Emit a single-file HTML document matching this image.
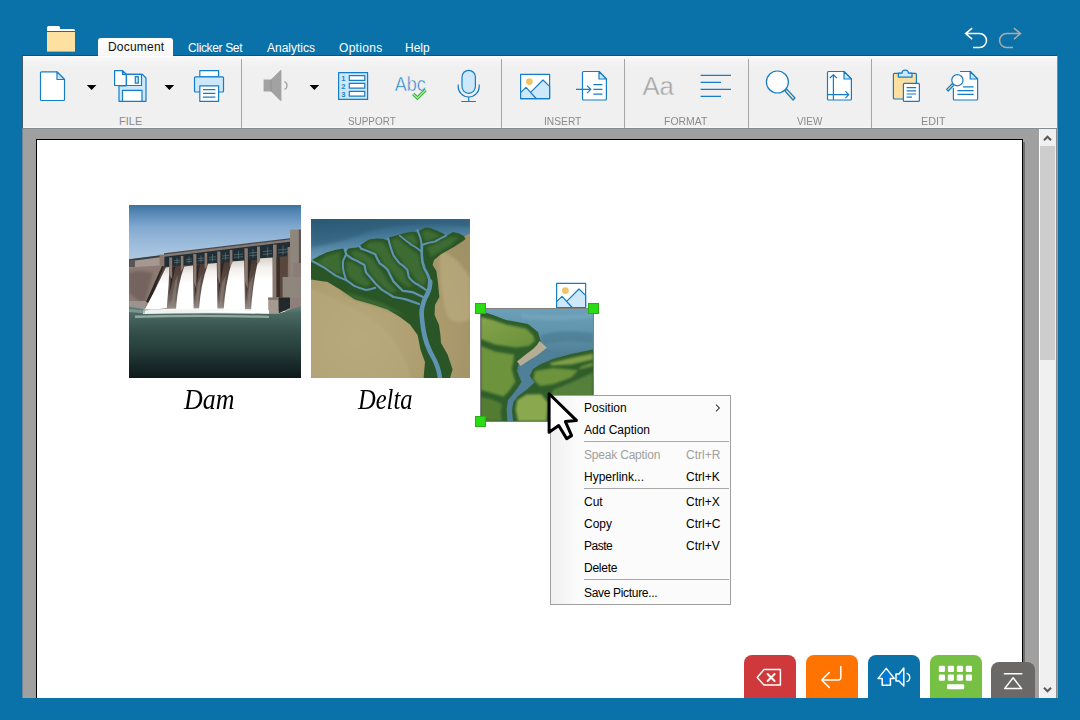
<!DOCTYPE html>
<html>
<head>
<meta charset="utf-8">
<title>Clicker</title>
<style>
html,body{margin:0;padding:0;}
body{width:1080px;height:720px;overflow:hidden;background:#0b72a9;font-family:"Liberation Sans",sans-serif;position:relative;}
.abs{position:absolute;}
#ribbon{left:22px;top:55px;width:1036px;height:73px;background:linear-gradient(#ffffff 0px,#f7f7f7 2px,#f0f0f0 11px,#f0f0f0 70px,#fafafa 72px);border-top:1px solid #3c444b;border-left:1px solid #3f5a70;border-right:1px solid #8b8783;box-sizing:border-box;}
#docarea{left:22px;top:128px;width:1036px;height:570px;background:#a0a0a0;border-top:1px solid #828a92;border-left:1px solid #6f8496;box-sizing:border-box;}
#page{left:36px;top:139px;width:987px;height:559px;background:#fff;border-left:1px solid #000;border-top:1px solid #000;border-right:1px solid #000;box-sizing:border-box;}
#pshadow{left:1023px;top:142px;width:2px;height:556px;background:#6e6e6e;}
#scroll{left:1039px;top:129px;width:18px;height:569px;background:#f0f0f0;border-left:1px solid #fff;border-right:1px solid #8a8a8a;box-sizing:border-box;}
#thumb{left:1040px;top:146px;width:15px;height:214px;background:#cdcdcd;}
.tab{color:#fff;font-size:12px;top:41px;white-space:nowrap;line-height:14px;}
#tabdoc{left:98px;top:38px;width:75px;height:18px;background:linear-gradient(#ffffff,#f6f6f6);border-radius:3px 3px 0 0;}
.sep{top:59px;width:1px;height:69px;background:#a6a6a6;}
.glabel{top:115px;font-size:11px;color:#8a8a8a;line-height:13px;white-space:nowrap;transform-origin:0 0;}
svg{position:absolute;overflow:visible;}
.menu{left:550px;top:395px;width:181px;height:210px;background:#fbfbfb;border:1px solid #a0a0a0;box-sizing:border-box;}
.gut{left:551px;top:396px;width:26px;height:208px;background:linear-gradient(90deg,#f1f1f1,#f6f6f6 60%,#fbfbfb);}
.mi{left:584px;font-size:12px;color:#000;line-height:14px;white-space:nowrap;}
.sc{left:686px;font-size:12px;color:#000;line-height:14px;white-space:nowrap;}
.msep{left:584px;width:145px;height:1px;background:#a8a8a8;}
.cap{font-family:"Liberation Serif",serif;font-style:italic;font-size:28.5px;transform-origin:0 0;color:#000;line-height:30px;white-space:nowrap;}
.btn{top:655px;width:52px;height:43px;border-radius:8px 8px 0 0;}
.hd{width:9px;height:9px;background:#2bdc14;border:1px solid #25b011;}
</style>
</head>
<body>
<!-- frame -->
<div id="ribbon" class="abs"></div>
<div id="docarea" class="abs"></div>
<div id="page" class="abs"></div>
<div id="pshadow" class="abs"></div>
<div id="scroll" class="abs"></div>
<div id="thumb" class="abs"></div>

<!-- tabs -->
<div id="tabdoc" class="abs"></div>
<div class="abs tab" style="left:108px;top:40px;color:#111;letter-spacing:0.2px">Document</div>
<div class="abs tab" style="left:188px;letter-spacing:-0.35px;">Clicker Set</div>
<div class="abs tab" style="left:267px;">Analytics</div>
<div class="abs tab" style="left:339px;letter-spacing:0.3px">Options</div>
<div class="abs tab" style="left:405px;">Help</div>

<!-- RIBBON-START -->
<!-- top icons -->
<svg class="abs" style="left:0;top:0" width="1080" height="60" viewBox="0 0 1080 60">
  <!-- folder -->
  <path d="M47 27.5 Q47 26 48.5 26 H58.5 Q60 26 60 27.5 V29 H73.5 Q75 29 75 30.5 V31 H47 Z" fill="#ffffff"/>
  <rect x="47" y="32" width="28" height="19.6" fill="#fee0a0"/>
  <!-- undo -->
  <path d="M972.2 28.1 L965.6 33.6 L972.2 39.1 M965.8 33.6 H979.5 A7 7 0 0 1 979.5 47.6 H973" fill="none" stroke="#ffffff" stroke-width="1.5"/>
  <!-- redo -->
  <path d="M1013.9 28.1 L1020.5 33.6 L1013.9 39.1 M1020.3 33.6 H1006.6 A7 7 0 0 0 1006.6 47.6 H1013" fill="none" stroke="#aeaaa6" stroke-width="1.5"/>
</svg>

<!-- ribbon separators -->
<div class="abs sep" style="left:241px"></div>
<div class="abs sep" style="left:501px"></div>
<div class="abs sep" style="left:624px"></div>
<div class="abs sep" style="left:748px"></div>
<div class="abs sep" style="left:871px"></div>

<!-- group labels -->
<div class="abs glabel" style="left:119px;transform:scaleX(1.0)">FILE</div>
<div class="abs glabel" style="left:348px;transform:scaleX(0.9)">SUPPORT</div>
<div class="abs glabel" style="left:544px;transform:scaleX(0.93)">INSERT</div>
<div class="abs glabel" style="left:664px;transform:scaleX(0.95)">FORMAT</div>
<div class="abs glabel" style="left:797px;transform:scaleX(0.9)">VIEW</div>
<div class="abs glabel" style="left:921px;transform:scaleX(0.98)">EDIT</div>

<!-- ribbon icons -->
<svg class="abs" style="left:0;top:56px" width="1080" height="72" viewBox="0 56 1080 72">
 <g fill="none" stroke="#157dc7" stroke-width="1.2" stroke-linejoin="round">
  <!-- new doc -->
  <path d="M41.5 71.8 H57 L64.5 79.5 V99.5 Q64.5 100.5 63.5 100.5 H41.5 Q40.5 100.5 40.5 99.5 V72.8 Q40.5 71.8 41.5 71.8 Z" fill="#ffffff"/>
  <path d="M57 71.8 V79.5 H64.5 Z" fill="#cde8fb"/>
  <!-- save -->
  <path d="M119 86 V101.3 H146 V78 L142.5 74.3 H126 V86 Z" fill="#cde8fb"/>
  <rect x="126.5" y="74.3" width="15" height="11.2" fill="#ffffff"/>
  <rect x="135.3" y="76.6" width="3" height="6.6" fill="#cde8fb"/>
  <rect x="122.5" y="90.3" width="19.5" height="11" fill="#ffffff"/>
  <path d="M114.6 70.6 H122.5 L126.2 74.3 V85.5 H114.6 Z" fill="#ffffff"/>
  <path d="M122.5 70.6 V74.3 H126.2 Z" fill="#cde8fb"/>
  <!-- printer -->
  <rect x="199.8" y="70.6" width="18.8" height="6.2" fill="#ffffff"/>
  <path d="M195.5 76.8 H222.5 Q223.5 76.8 223.5 77.8 V91 Q223.5 92 222.5 92 H195.5 Q194.5 92 194.5 91 V77.8 Q194.5 76.8 195.5 76.8 Z" fill="#cde8fb"/>
  <rect x="199.8" y="85.8" width="18.8" height="15.5" fill="#ffffff"/>
  <path d="M203 89.6 H215.4 M203 93.4 H215.4 M203 97.2 H215.4"/>
  <!-- numbered list -->
  <rect x="338.6" y="72.6" width="29" height="26.8" fill="#cde8fb"/>
  <rect x="349.3" y="75.6" width="15.5" height="4.8" fill="#ffffff"/>
  <rect x="349.3" y="83.4" width="15.5" height="4.8" fill="#ffffff"/>
  <rect x="349.3" y="91.4" width="15.5" height="4.8" fill="#ffffff"/>
  <!-- microphone -->
  <rect x="462" y="70.3" width="13.4" height="23" rx="6.7" fill="#cde8fb"/>
  <path d="M458.2 84.5 V86.5 A10.5 10.5 0 0 0 479.2 86.5 V84.5 M468.7 97 V101.4 M461.3 101.5 H476"/>
  <!-- picture -->
  <rect x="520.6" y="74.4" width="29" height="24.2" fill="#ffffff"/>
  <path d="M520.6 92.6 L526 87.4 L536.4 98.6 H520.6 Z" fill="#cde8fb"/>
  <path d="M530.6 92.4 L543 80 L549.6 86.4 V98.6 H536.4 Z" fill="#cde8fb"/>
  <!-- insert doc -->
  <path d="M583.5 71.5 H599 L606.4 79 V99 Q606.4 100 605.4 100 H583.5 Q582.5 100 582.5 99 V72.5 Q582.5 71.5 583.5 71.5 Z" fill="#ffffff"/>
  <path d="M599 71.5 V79 H606.4 Z" fill="#cde8fb"/>
  <path d="M576 89.4 H590.8 M587 85.6 L590.8 89.4 L587 93.2 M593.4 84.7 H602.4 M593.4 89.4 H602.4 M593.4 94.1 H602.4"/>
  <!-- align -->
  <path d="M700.6 75.4 H731 M700.6 82.4 H721 M700.6 89.4 H731 M700.6 96.4 H721"/>
  <!-- magnifier -->
  <path d="M785 91 L786.8 89.2 L795 98 L793 100 Z" fill="#f7e0a2"/>
  <circle cx="777.4" cy="82" r="11" fill="#ffffff"/>
  <!-- page layout -->
  <path d="M828.5 71.5 H844 L851.4 79 V99 Q851.4 100 850.4 100 H828.5 Q827.5 100 827.5 99 V72.5 Q827.5 71.5 828.5 71.5 Z" fill="#ffffff"/>
  <path d="M844 71.5 V79 H851.4 Z" fill="#cde8fb"/>
  <path d="M833.4 100 V74.6 M830 78 L833.4 74.6 L836.8 78 M827.5 94.7 H848.8 M845.4 91.3 L848.8 94.7 L845.4 98.1"/>
  <!-- clipboard -->
  <rect x="893.4" y="73.4" width="23" height="25.6" rx="1" fill="#fde0a0"/>
  <path d="M898.4 77.2 V73.2 H902 Q902 70.2 905.2 70.2 Q908.4 70.2 908.4 73.2 H912 V77.2 Z" fill="#cde8fb"/>
  <rect x="903.4" y="83.4" width="16" height="18" rx="1" fill="#ffffff"/>
  <path d="M906.6 87.6 H916.2 M906.6 90.8 H916.2 M906.6 94 H916.2 M906.6 97.2 H912"/>
  <!-- find -->
  <path d="M953.4 88 V99 Q953.4 100 954.4 100 H976.6 Q977.6 100 977.6 99 V79 L970.2 71.5 H960" fill="#ffffff"/>
  <path d="M970.2 71.5 V79 H977.6 Z" fill="#cde8fb"/>
  <path d="M957.4 90.6 H973.6 M957.4 94.4 H973.6 M963 86.8 H973.6"/>
  <path d="M952.5 83.5 L954 85 L948.2 91 L946.6 89.4 Z" fill="#f7e0a2"/>
  <circle cx="957.4" cy="80.2" r="5.6" fill="#ffffff"/>
 </g>
 <!-- sun dots -->
 <circle cx="529.4" cy="81.6" r="3.4" fill="#f2c266"/>
 <!-- list numbers -->
 <g fill="#1c83c9" font-family="Liberation Sans, sans-serif" font-weight="bold" font-size="7.6px">
  <text x="341.2" y="80.9">1</text><text x="341.2" y="88.7">2</text><text x="341.2" y="96.7">3</text>
 </g>
 <!-- dropdown arrows -->
 <path d="M86.8 85 H96.4 L91.6 90 Z M164.6 85 H174.2 L169.4 90 Z M309.6 85 H319.2 L314.4 90 Z" fill="#000"/>
 <!-- speaker (disabled) -->
 <path d="M263.6 79.6 H271 L280.6 70 Q281.4 69.6 281.4 70.6 V100.4 Q281.4 101.4 280.6 101 L271 91.4 H263.6 Z" fill="#a2a2a2"/>
 <path d="M271 79.6 V91.4" stroke="#8e8e8e" stroke-width="0.8" fill="none"/>
 <path d="M284.4 81.6 A4.2 4.2 0 0 1 284.4 89.4" stroke="#a2a2a2" stroke-width="1.3" fill="none"/>
 <!-- Abc -->
 <text x="394.8" y="90.6" font-family="Liberation Sans, sans-serif" font-size="19.5px" fill="#1c83c9" textLength="31" lengthAdjust="spacingAndGlyphs" stroke="#f0f0f0" stroke-width="0.55">Abc</text>
 <path d="M413.2 93.8 L417.4 98 L425.6 89.8" fill="none" stroke="#2fb52f" stroke-width="3.2"/>
 <path d="M413.2 93.8 L417.4 98 L425.6 89.8" fill="none" stroke="#b7efb0" stroke-width="1.1"/>
 <!-- Aa -->
 <text x="642.4" y="94.8" font-family="Liberation Sans, sans-serif" font-size="26.5px" fill="#a4a4a4" textLength="31.5" lengthAdjust="spacingAndGlyphs" stroke="#f0f0f0" stroke-width="0.45">Aa</text>
</svg>
<!-- RIBBON-END -->
<!-- IMAGES-START -->
<!-- dam image -->
<svg class="abs" style="left:129px;top:205px;overflow:hidden" width="172" height="173" viewBox="0 0 172 173">
 <defs>
  <linearGradient id="sky" x1="0" y1="0" x2="0" y2="1"><stop offset="0" stop-color="#3d729f"/><stop offset="0.12" stop-color="#5788b5"/><stop offset="0.35" stop-color="#82a9d0"/><stop offset="0.65" stop-color="#a0bfdd"/><stop offset="1" stop-color="#b4cde6"/></linearGradient>
  <linearGradient id="wat" x1="0" y1="0" x2="0" y2="1"><stop offset="0" stop-color="#64857c"/><stop offset="0.1" stop-color="#4a6a62"/><stop offset="0.35" stop-color="#35514a"/><stop offset="0.6" stop-color="#263f3a"/><stop offset="0.82" stop-color="#18292a"/><stop offset="1" stop-color="#0e1a19"/></linearGradient>
  <linearGradient id="gap" x1="0" y1="0" x2="0" y2="1"><stop offset="0" stop-color="#3e302b"/><stop offset="0.45" stop-color="#5b4b44"/><stop offset="0.8" stop-color="#70635d"/><stop offset="1" stop-color="#a39c98"/></linearGradient>
  <linearGradient id="fall" x1="0" y1="0" x2="0" y2="1"><stop offset="0" stop-color="#d8d0ca"/><stop offset="0.18" stop-color="#f3f0ed"/><stop offset="0.4" stop-color="#ffffff"/><stop offset="1" stop-color="#ffffff"/></linearGradient>
  <filter id="b1" x="-10%" y="-10%" width="120%" height="120%"><feGaussianBlur stdDeviation="0.55"/></filter>
  <filter id="b2" x="-10%" y="-10%" width="120%" height="120%"><feGaussianBlur stdDeviation="1.4"/></filter>
 </defs>
 <rect width="172" height="64" fill="url(#sky)"/>
 <!-- left wall -->
 <path d="M0 54.4 L31 50.4 L36 50 V104 H0 Z" fill="#8c7a73"/>
 <path d="M0 56 L31 52 V60.6 L0 62.4 Z" fill="#a59892"/>
 <path d="M0 54.2 L31 50.2 V52.2 L0 56.2 Z" fill="#3b3f40"/>
 <rect x="0" y="55" width="6" height="7" fill="#5a5552"/>
 <path d="M0 68 Q10 64 24 68 L16 98 Q8 96 0 88 Z" fill="#6a5a57" opacity="0.7" filter="url(#b2)"/>
 <path d="M0 96 H18 L16 104 H0 Z" fill="#9c928e"/>
 <path d="M33 61 L36.4 61.4 L21 98 L17 97 Z" fill="#2b2523"/>
 <!-- space behind falls -->
 <path d="M35 60 L161 48 V106 H18 Z" fill="url(#gap)"/>
 <!-- dark gate band -->
 <path d="M35 49.4 L161 34.4 V52.6 L35 61.6 Z" fill="#1f2e37"/>
 <path d="M35 49.2 L161 34.2 V36.8 L35 51.8 Z" fill="#857a72"/>
 <path d="M35 48.2 L161 33.2 V34.4 L35 49.4 Z" fill="#4a4746"/>
 <!-- gate grid hints -->
 <g stroke="#718e8a" stroke-width="0.7" opacity="0.75">
  <path d="M45 55.6 L51 55.1 M45 57.6 L51 57.1 M57 54.6 L63 54.1 M57 56.8 L63 56.3 M69 53.6 L75 53 M69 55.8 L75 55.2 M80 52.4 L87 51.8 M80 54.8 L87 54.2 M93 51 L100 50.4 M93 53.4 L100 52.8 M105 49.8 L114 49 M105 52.4 L114 51.6 M120 48.2 L128 47.4 M120 50.8 L128 50 M134 46.6 L143 45.8 M134 49.4 L143 48.6 M149 45 L159 44 M149 47.8 L159 46.8"/>
  <path d="M48 52.8 V59.6 M60 51.6 V58.6 M72 50.4 V57.6 M83.5 49 V56.6 M96.5 47.4 V55.4 M109.5 45.8 V54 M124 44 V52.8 M138.5 42.2 V51.6 M154 40.4 V50"/>
 </g>
 <!-- dark shadow in gaps -->
 <g fill="#2c2421" opacity="0.85" filter="url(#b1)">
  <path d="M43 62 L46.5 61.6 L42.5 80 L40 90 Z"/>
  <path d="M67.4 60 L71 59.6 L67.5 82 L65.5 94 Z"/>
  <path d="M91.2 57.6 L95 57.2 L91.2 80 L89 94 Z"/>
  <path d="M119 55 L122.6 54.6 L119 80 L117 94 Z"/>
 </g>
 <!-- light streaks in gaps -->
 <g fill="#9a908b" opacity="0.45" filter="url(#b1)">
  <path d="M46 76 L49 70 L46 98 L42 100 Z"/>
  <path d="M69 78 L72.5 70 L69 100 L66.5 100 Z"/>
  <path d="M93 78 L97 70 L93 100 L90 100 Z"/>
  <path d="M120.5 78 L124.5 70 L121 100 L118 100 Z"/>
 </g>
 <!-- waterfalls -->
 <g filter="url(#b1)">
 <path d="M36.8 62.4 L40.4 62 L39.6 80 L37.8 103 L15 106 Q26 86 36.8 62.4 Z" fill="url(#fall)"/>
 <path d="M55.2 61.4 L64 60.6 L64.6 104 H47 Q48.4 80 55.2 61.4 Z" fill="url(#fall)"/>
 <path d="M79 58.8 L87.8 58 L88.4 104.6 H70 Q71.6 80 79 58.8 Z" fill="url(#fall)"/>
 <path d="M102.8 56.4 L115.2 55.4 L116 105.4 H94.6 Q96.2 80 102.8 56.4 Z" fill="url(#fall)"/>
 <path d="M129.3 53.6 L143.6 52.6 V107 L122 106.5 Q123.4 80 129.3 53.6 Z" fill="url(#fall)"/>
 </g>
 <!-- pillars -->
 <g fill="#8d786d">
  <path d="M30.6 49.6 H35.4 V61 H30.6 Z"/>
  <path d="M40.2 52.6 H43.2 V74 L40.4 70 Z"/><path d="M51.8 51 H54.4 V63 L51.8 66.4 Z"/>
  <path d="M64.2 49 H67.4 V84 L64.6 76 Z"/><path d="M75.6 48 H78.2 V61 L75.6 64.4 Z"/>
  <path d="M88.2 46.4 H91.4 V80 L88.6 72 Z"/><path d="M100.8 45 H103.4 V58 L100.8 62 Z"/>
  <path d="M115.4 43.2 H118.8 V84 L116 76 Z"/><path d="M128 41.6 H131 V56 L128 60 Z"/>
  <path d="M144 39.6 H147.6 V92 H144 Z"/>
  <path d="M158.6 42 H162.4 V72 H158.6 Z"/>
 </g>
 <path d="M147.6 52 L158.6 51 V92 H147.6 Z" fill="#59473f"/>
 <path d="M147.6 52 L151 51.6 V92 H147.6 Z" fill="#3a2e2a"/>
 <!-- tower + right blocks -->
 <rect x="161" y="24.6" width="11" height="48" fill="#8e857d"/>
 <rect x="169.8" y="24.6" width="2.2" height="48" fill="#5c5550"/>
 <rect x="164" y="58" width="8" height="16" fill="#8d7d78"/>
 <rect x="153.6" y="72" width="18.4" height="22" fill="#8f867e"/>
 <rect x="161" y="93" width="11" height="13" fill="#8e7f7a"/>
 <rect x="139.2" y="92.6" width="10.4" height="16" fill="#a59a92"/>
 <rect x="139.2" y="92.6" width="10.4" height="2.2" fill="#7d726c"/>
 <path d="M149.6 92.6 H161 V103 L149.6 108.6 Z" fill="#23282a"/>
 <!-- water -->
 <path d="M0 101.6 L16 104.6 L140 108.6 L150 108.6 L172 101 V173 H0 Z" fill="url(#wat)"/>
 <g filter="url(#b1)">
 <path d="M14 105.4 Q60 101.5 140 105 L140 108.8 Q70 107.8 14 109 Z" fill="#ffffff" opacity="0.9"/>
 <path d="M6 110.6 Q70 108.8 140 110.8 L140 113 Q70 111.2 6 113 Z" fill="#c4d2cc" opacity="0.6"/>
 <path d="M0 104 L16 105.6 V108.4 L0 107 Z" fill="#8ea49c" opacity="0.7"/>
 </g>
</svg>

<!-- delta image -->
<svg class="abs" style="left:311px;top:219px;overflow:hidden" width="159" height="159" viewBox="0 0 159 159">
 <defs>
  <linearGradient id="sea" x1="0.2" y1="0" x2="0.45" y2="1"><stop offset="0" stop-color="#2d5c78"/><stop offset="0.3" stop-color="#3f7290"/><stop offset="0.6" stop-color="#5f93b0"/><stop offset="1" stop-color="#7aaac4"/></linearGradient>
  <radialGradient id="sand" cx="0.3" cy="0.75" r="0.85"><stop offset="0" stop-color="#b8a97c"/><stop offset="0.55" stop-color="#ac9c6e"/><stop offset="1" stop-color="#a09166"/></radialGradient>
  <filter id="db" x="-10%" y="-10%" width="120%" height="120%"><feGaussianBlur stdDeviation="1.6"/></filter>
  <filter id="db2" x="-10%" y="-10%" width="120%" height="120%"><feGaussianBlur stdDeviation="0.5"/></filter>
 </defs>
 <rect width="159" height="159" fill="url(#sand)"/>
 <path d="M128 30 Q150 40 159 60 V100 Q140 110 134 90 Q128 60 128 30 Z" fill="#bfb084" opacity="0.6" filter="url(#db)"/>
 <path d="M0 70 Q30 80 60 100 Q90 120 100 159 H0 Z" fill="#b9aa7e" opacity="0.55" filter="url(#db)"/>
 <path d="M0 0 H159 V14.6 L153 17.4 L141 24 L122 38 L60 50 L0 52 Z" fill="url(#sea)"/>
 <path d="M0 28 Q30 24 60 12 Q100 2 159 8 V0 H0 Z" fill="#2a5873" opacity="0.5" filter="url(#db)"/>
 <!-- vegetation -->
 <g filter="url(#db2)">
 <path d="M0 41.6 L8 37 L15.4 33.6 L24 31 L32 29.6 L35 33 L37.4 29.6 L47.4 28.2 L49.8 25.8 L58 20.6 L66 19.6 L72 19.8 L76.4 21.4 L78 18.4 L87 16 L89.4 15.2 L96 13.6 L102.4 12.8 L106.6 13.4 L108.6 11.4 L114.6 8.4 L119 9 L123.8 10.8 L130 13.4 L134 15.6 L135.4 16.8 L142 13 L148 14.6 L153 17 L154.4 20 L152.8 21.6 L143.6 27.6 L130 35.2 L123 41 L121.6 46 L125.4 52 L127 64 L128.4 78 L124 86 L123.6 96 L128 106 L129.4 116 L130 124 L136.6 135.6 L141.6 150.6 L139 159 H112.6 L114 143 L109.6 131 L106.6 116 L99 105.6 L89 98 L76.6 90.6 L61.6 85.6 L44 80.6 L29 70.6 L16.6 63 L0 60.6 Z" fill="#2b5427"/>
 </g>
 <!-- lighter interior of lobes -->
 <g fill="#4c7c3c" opacity="0.6" filter="url(#db)">
  <path d="M6 43 L16 36.4 L29 33 L30 44 L30.6 56 L22 53 L12 47 Z"/>
  <path d="M39 33 L47 31.4 L52 34 L62 40 L66 47 L72 54 L78 64 L86 72 L80 74 L70 66 L62 58 L57 50 L55 44 L44 39 Z"/>
  <path d="M36 42 L42 44 L51 49 L52 56 L60 64 L56 68 L46 64 L38 58 L35 50 Z"/>
  <path d="M53 27 L60 23 L72 23 L77 30 L80 38 L86 46 L93 52 L95 60 L102 68 L96 68 L88 62 L80 52 L72 44 L68 36 L58 30 Z"/>
  <path d="M80 21 L87 19 L92 24 L100 30 L108 36 L110 48 L116 60 L112 68 L104 60 L99 52 L92 44 L86 36 L82 28 Z"/>
  <path d="M92 17 L102 15 L106 22 L106 26 L98 23 Z"/>
  <path d="M111 13 L116 11 L124 14 L130 17 L120 21 L114 22 Z"/>
  <path d="M116 28 L126 24 L138 18 L148 18 L140 26 L128 33 L120 38 Z"/>
  <path d="M30 72 L50 78 L70 84 L90 94 L100 100 L92 96 L70 88 L44 80 Z"/>
 </g>
 <!-- channels -->
 <g fill="none" stroke="#5f93b2" stroke-linecap="round" stroke-linejoin="round">
  <path d="M129 159 Q127.6 148 122 138 Q115 126 112.6 112 Q110.6 100 110.6 92 Q112 82 116.4 75 Q119.6 68 119.2 62.6" stroke-width="4.6"/>
  <path d="M119.2 62.6 Q117 55 113.2 49 Q110.6 42 110.8 35 L110.8 26" stroke-width="2.6"/>
  <path d="M110.8 26 Q109.6 18 106.4 11" stroke-width="1.9"/>
  <path d="M110.8 26 Q117 23.4 123.8 22.6 Q130 19 135 16.6" stroke-width="1.9"/>
  <path d="M110.8 33 Q105 28 100.8 26 Q94 21 88.8 16.6" stroke-width="1.8"/>
  <path d="M115 71 Q108 66 104 64.2 Q99 60 97.8 58 Q97 54 96.2 50.6 Q92 46 88.6 44.4 Q85 40 82.6 36.6 Q80.4 31 79.4 27.6 Q78 23 77.2 19.6" stroke-width="2.1"/>
  <path d="M112 78 Q106 75 102.4 73.4 Q96 72 91.6 71.8 Q86 66 82.6 62.6 Q79 56 76.4 50.6 Q72 46 68.8 44.4 Q66 40 64.2 35.2 Q57 32 50.4 29.8 L48.6 27.4" stroke-width="2.2"/>
  <path d="M108 85 Q100 82 94.8 80.4 Q88 79 82.6 78 Q76 74 70.4 70.4 Q66 66 64.2 64.2 Q59 58 55 53.4 Q54 49 53.4 46 Q47 42 41.2 39.8 Q37 37 35.2 35.2 Q34 32 33.8 29.6" stroke-width="2.2"/>
  <path d="M64.2 68.8 Q59 70.6 55 71 Q48 69 42.8 66.6 Q38 63 35.2 61.2 Q33 55 32.2 50.6 Q31.6 45 32.2 41.4 L35.2 35.2" stroke-width="2"/>
  <path d="M35.2 61.2 Q29 58.6 24.6 56.6 Q18 52 13.8 49 Q7 45 1 42" stroke-width="2"/>
 </g>
</svg>

<!-- captions -->
<div class="abs cap" style="left:183.5px;top:385px;transform:scaleX(0.91)">Dam</div>
<div class="abs cap" style="left:358px;top:385px;transform:scaleX(0.86)">Delta</div>

<!-- small picture badge -->
<svg class="abs" style="left:0;top:0" width="1080" height="720" viewBox="0 0 1080 720">
 <g stroke="#157dc7" stroke-width="1.2" stroke-linejoin="round">
  <rect x="556.6" y="283.4" width="29" height="24.2" fill="#ffffff"/>
  <path d="M556.6 301.6 L562 296.4 L572.4 307.6 H556.6 Z" fill="#cde8fb"/>
  <path d="M566.6 301.4 L579 289 L585.6 295.4 V307.6 H572.4 Z" fill="#cde8fb"/>
 </g>
 <circle cx="565.4" cy="290.6" r="3.4" fill="#f2c266"/>
</svg>

<!-- selected valley image -->
<div class="abs" style="left:480px;top:308px;width:114px;height:114px;background:#808080;"></div>
<svg class="abs" style="left:481px;top:309px;overflow:hidden" width="112" height="112" viewBox="0 0 112 112">
 <defs>
  <linearGradient id="vsea" x1="0" y1="0" x2="0" y2="1"><stop offset="0" stop-color="#6c9fb8"/><stop offset="0.22" stop-color="#5f93ab"/><stop offset="0.42" stop-color="#4d7d93"/><stop offset="1" stop-color="#4a7a8e"/></linearGradient>
  <linearGradient id="hill" x1="0" y1="0" x2="1" y2="1"><stop offset="0" stop-color="#86a44a"/><stop offset="1" stop-color="#67903a"/></linearGradient>
  <filter id="vb" x="-10%" y="-10%" width="120%" height="120%"><feGaussianBlur stdDeviation="0.8"/></filter>
 </defs>
 <rect width="112" height="112" fill="url(#vsea)"/>
 <path d="M60 26 Q80 20 112 24 V34 Q84 30 62 36 Z" fill="#4b7b92" opacity="0.7" filter="url(#vb)"/>
 <path d="M40 4 Q70 8 112 4 V9 Q70 13 40 9 Z" fill="#79a9c0" opacity="0.6" filter="url(#vb)"/>
 <!-- river -->
 <path d="M65 39 L78 46 L60 54 L50 62 L50 70 L52 74 L45 81 L35 90 L31.5 100 L32.5 112 H25.5 L24.5 100 L26 92 L35 82 L41 74 L38 64 L38.5 56 L55 44 Z" fill="#4f8097"/>
 <!-- right bank base (hedges) -->
 <path d="M112 40.5 L90 45 L72 50 L60 55 L52 60 L48.6 67 L53.6 73.6 L46 80.4 L37 87 L32.4 93 L31 101 L32 112 H112 Z" fill="#2f5e2b"/>
 <g filter="url(#vb)">
 <path d="M69 54 L90 49 L112 44.6 V50.4 L90.4 55.4 L70.4 56.4 Z" fill="#7f9e45"/>
 <path d="M54 62 L72 59 L97 61.2 L90.4 68.6 L72 75.2 L58.8 77 L52.4 70.4 Z" fill="#6d933d"/>
 <path d="M112 53.4 L100 57.6 L98 60.6 L112 57 Z" fill="#6d933d"/>
 <path d="M72 81 L90 73.6 L112 63.6 V112 H68 L67 94 Z" fill="#55803a"/>
 <path d="M36.4 91 L45.4 85.4 L60.4 85.2 L66.6 93.6 L65.4 112 H37 L34.6 100 Z" fill="#8aa84e"/>
 </g>
 <!-- left bank base (hedges) -->
 <path d="M0 2 L12 6 L25 11 L47 15 L57 23 L60 33 L55 40 L47 46 L38 54 L36 62 L40.4 73 L34 82.6 L27 91 L25.6 100 L26.4 112 H0 Z" fill="#2f5e2b"/>
 <g filter="url(#vb)">
 <path d="M0 8 L12 11 L25 15.6 L45 19.6 L52 26 L54 32 L48 37 L35 38.4 L14 35.6 L0 30 Z" fill="url(#hill)"/>
 <path d="M0 37 L14 42.6 L33 45.6 L32.4 52 L30.6 60 L34.4 73 L28 82 L22.6 87.6 L13.6 85 L0 81 Z" fill="#6d933d"/>
 <path d="M0 88 L13 91 L21 95 L19.6 104 L21 112 H0 Z" fill="#527c33"/>
 </g>
 <!-- sand -->
 <path d="M58.6 32 L66 38.8 L56 46.4 L47 52 L39.6 57 L36 52.6 L44 46 L52 40 L56 36 Z" fill="#b6ae92"/>
</svg>
<!-- handles -->
<div class="abs hd" style="left:475px;top:303px"></div>
<div class="abs hd" style="left:588px;top:303px"></div>
<div class="abs hd" style="left:475px;top:416px"></div>
<!-- IMAGES-END -->
<!-- MENU-START -->
<!-- context menu -->
<div class="abs menu"></div>
<div class="abs gut"></div>
<div class="abs mi" style="top:401px">Position</div>
<div class="abs mi" style="top:423px">Add Caption</div>
<div class="abs msep" style="top:441px"></div>
<div class="abs mi" style="top:448px;color:#a0a0a0;letter-spacing:-0.2px">Speak Caption</div>
<div class="abs sc" style="top:448px;color:#a0a0a0">Ctrl+R</div>
<div class="abs mi" style="top:470px">Hyperlink...</div>
<div class="abs sc" style="top:470px">Ctrl+K</div>
<div class="abs msep" style="top:488px"></div>
<div class="abs mi" style="top:495px">Cut</div>
<div class="abs sc" style="top:495px">Ctrl+X</div>
<div class="abs mi" style="top:517px">Copy</div>
<div class="abs sc" style="top:517px">Ctrl+C</div>
<div class="abs mi" style="top:539px;letter-spacing:-0.5px">Paste</div>
<div class="abs sc" style="top:539px">Ctrl+V</div>
<div class="abs mi" style="top:561px;letter-spacing:-0.25px">Delete</div>
<div class="abs msep" style="top:579px"></div>
<div class="abs mi" style="top:586px;letter-spacing:-0.32px">Save Picture...</div>
<svg class="abs" style="left:0;top:0" width="1080" height="720" viewBox="0 0 1080 720">
 <path d="M716 404.6 L719.4 408 L716 411.4" fill="none" stroke="#404040" stroke-width="1.1"/>
 <!-- cursor -->
 <path d="M549.1 393.8 V432.2 L558.7 425.5 L566.7 438.6 L571.6 435.6 L565.4 421.6 L576.4 420.4 Z" fill="#ffffff" stroke="#000000" stroke-width="3" stroke-linejoin="round"/>
</svg>
<!-- MENU-END -->
<!-- BUTTONS-START -->
<!-- bottom buttons -->
<div class="abs btn" style="left:744px;background:#cf393b"></div>
<div class="abs btn" style="left:806px;background:#ff7400"></div>
<div class="abs btn" style="left:868px;background:#0b72a9"></div>
<div class="abs btn" style="left:930px;background:#76c043"></div>
<div class="abs btn" style="left:991px;top:662px;width:44px;height:36px;background:#6b6968"></div>
<svg class="abs" style="left:0;top:640px" width="1080" height="80" viewBox="0 640 1080 80">
 <g fill="none" stroke="#ffffff" stroke-width="1.5" stroke-linejoin="round" stroke-linecap="round">
  <!-- backspace -->
  <path d="M757.2 677.4 L764 669.6 H780.4 V685 H764 Z"/>
  <path d="M767.6 674 L774.6 681 M774.6 674 L767.6 681" stroke-width="1.9"/>
  <!-- enter -->
  <path d="M840.8 666.4 V677.6 Q840.8 680 838.4 680 H821.6 M829.2 672.6 L821.6 680 L829.2 687.4"/>
  <!-- up arrow + speaker -->
  <path d="M886.2 668.4 L894.4 678.6 H890.4 V685.2 H882.2 V678.6 H878 Z" fill="#0079d0"/>
  <path d="M896 674 H899 L903.8 668 V686 L899 681 H896 Z" fill="#0079d0"/>
  <path d="M907 673.4 A4.4 4.4 0 0 1 907 681.6" stroke-width="1.3"/>
  <!-- up-to-line -->
  <path d="M1004.4 673.8 H1021.8 M1013.1 677.8 L1021.6 688.6 H1004.6 Z"/>
 </g>
 <!-- keyboard -->
 <g fill="#ffffff">
  <rect x="938.8" y="665.8" width="6.2" height="6.2" rx="1.2"/><rect x="947.8" y="665.8" width="6.2" height="6.2" rx="1.2"/><rect x="956.8" y="665.8" width="6.2" height="6.2" rx="1.2"/><rect x="965.8" y="665.8" width="6.2" height="6.2" rx="1.2"/>
  <rect x="938.8" y="674.6" width="6.2" height="6.2" rx="1.2"/><rect x="947.8" y="674.6" width="6.2" height="6.2" rx="1.2"/><rect x="956.8" y="674.6" width="6.2" height="6.2" rx="1.2"/><rect x="965.8" y="674.6" width="6.2" height="6.2" rx="1.2"/>
  <rect x="947" y="684.2" width="17.2" height="5" rx="1.2"/>
 </g>
</svg>
<!-- scrollbar chevrons -->
<svg class="abs" style="left:0;top:0" width="1080" height="720" viewBox="0 0 1080 720">
 <path d="M1044 140.2 L1047.5 136.7 L1051 140.2" fill="none" stroke="#5a5a5a" stroke-width="2.1"/>
 <path d="M1044 687.8 L1047.5 691.3 L1051 687.8" fill="none" stroke="#5a5a5a" stroke-width="2.1"/>
</svg>
<!-- BUTTONS-END -->
</body>
</html>
